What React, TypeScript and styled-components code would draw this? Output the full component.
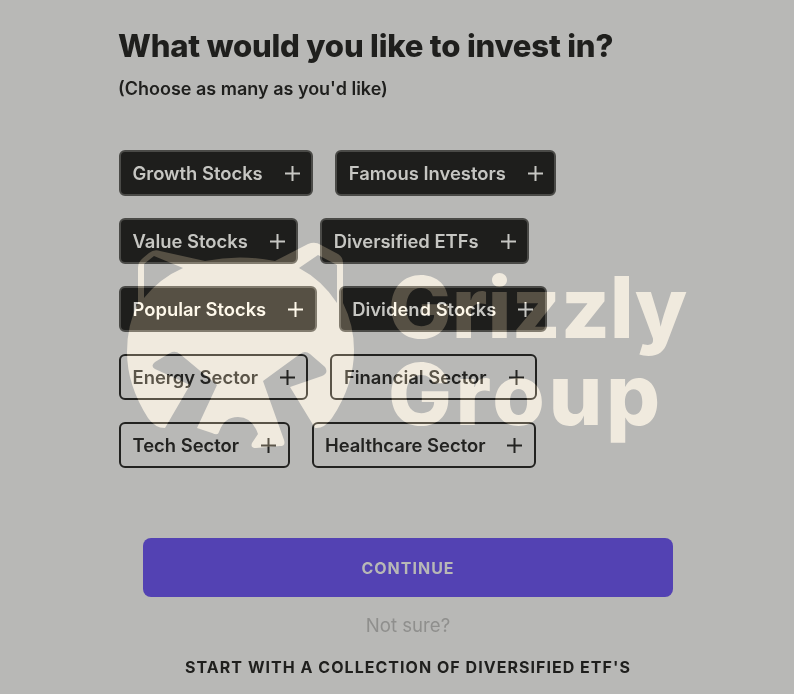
import React from "react";
import styled, { createGlobalStyle } from "styled-components";

const GlobalStyle = createGlobalStyle`
  html, body {
    margin: 0;
    padding: 0;
    background: #b8b8b6;
  }
`;

const Page = styled.main`
  position: relative;
  isolation: isolate;
  width: 794px;
  height: 694px;
  overflow: hidden;
  box-sizing: border-box;
  padding: 27px 0 0 119px;
  background: #b8b8b6;
  font-family: Inter, "Liberation Sans", sans-serif;
  color: #1f1f1d;
`;

const Title = styled.h1`
  margin: 0 0 0 -1px;
  font-size: 31.1px;
  line-height: 38px;
  font-weight: 800;
  letter-spacing: -0.2px;
`;

const Subtitle = styled.p`
  margin: 11px 0 0 -1px;
  font-size: 18px;
  line-height: 26px;
  font-weight: 600;
`;

const Options = styled.div`
  display: flex;
  flex-direction: column;
  align-items: flex-start;
  gap: 22px;
  margin-top: 48px;
`;

const Row = styled.div`
  display: flex;
  gap: 22px;
`;

const Chip = styled.button<{ $filled: boolean }>`
  display: flex;
  align-items: center;
  justify-content: space-between;
  gap: 22px;
  height: 46px;
  box-sizing: border-box;
  padding: 0 11.5px;
  border-radius: 6px;
  border: 2.5px solid ${({ $filled }) => ($filled ? "#4a4a47" : "#222220")};
  background: ${({ $filled }) => ($filled ? "#1e1e1c" : "transparent")};
  color: ${({ $filled }) => ($filled ? "#c6c6c2" : "#232321")};
  font-family: inherit;
  font-size: 18.4px;
  font-weight: 600;
  white-space: nowrap;
`;

const PlusIcon = styled.svg`
  width: 15px;
  height: 15px;
  flex: none;
`;

const Footer = styled.div`
  display: flex;
  flex-direction: column;
  align-items: center;
  width: 530px;
  margin: 70px 0 0 24px;
`;

const ContinueButton = styled.button`
  width: 100%;
  height: 59px;
  border: 0;
  border-radius: 8px;
  background: #5342b3;
  color: #b8b8b6;
  font-family: inherit;
  font-size: 16px;
  font-weight: 700;
  letter-spacing: 1px;
`;

const NotSure = styled.p`
  margin: 16px 0 0;
  font-size: 18.6px;
  line-height: 24px;
  color: #8f8f8d;
`;

const CollectionLink = styled.a`
  margin-top: 19px;
  font-size: 16px;
  line-height: 22px;
  font-weight: 700;
  letter-spacing: 1.03px;
  color: #1f1f1d;
  white-space: nowrap;
`;

// watermark sits over the whole page and adds light to whatever is under it
const Watermark = styled.div`
  position: absolute;
  inset: 0;
  mix-blend-mode: plus-lighter;
  pointer-events: none;
`;

const BearMark = styled.svg`
  position: absolute;
  left: 0;
  top: 0;
  width: 794px;
  height: 694px;
`;

const Brand = styled.div`
  position: absolute;
  left: 388px;
  top: 264px;
  font-size: 85px;
  line-height: 87px;
  font-weight: 800;
  color: rgb(56, 50, 40);
`;

const BrandLine = styled.div<{ $spacing: number }>`
  letter-spacing: ${({ $spacing }) => $spacing}px;
`;

const options = [
  [
    { label: "Growth Stocks", filled: true },
    { label: "Famous Investors", filled: true },
  ],
  [
    { label: "Value Stocks", filled: true },
    { label: "Diversified ETFs", filled: true },
  ],
  [
    { label: "Popular Stocks", filled: true },
    { label: "Dividend Stocks", filled: true },
  ],
  [
    { label: "Energy Sector", filled: false },
    { label: "Financial Sector", filled: false },
  ],
  [
    { label: "Tech Sector", filled: false },
    { label: "Healthcare Sector", filled: false },
  ],
];

const bearPath = `
  M138 303 L138 268 Q138 262 143 258 L149 253 Q154 249 160 251 L205 261
  Q240 254 275 261 L308 244 Q315 241 321 245 L338 254 Q343 257 343 263 L343 303
  Q354 325 354 350 Q354 385 332 418 Q324 429 315 428 L290 387
  L322 376 Q329 373 325 367 L310 354 Q305 350 300 354 L263 381
  L284 440 Q286 446 280 446 L256 448 Q250 448 252 443 L258 434
  Q252 417 238 417 Q224 417 219 432 Q218 436 212 433 L197 428
  L217 385 L180 354 Q175 350 170 353 L155 362 Q150 366 155 369 L190 385
  L165 428 Q155 428 148 418 Q127 385 127 352 Q127 325 138 303 Z
  M144 264 L154 256 L183 268 Q160 278 144 298 Z
  M299 268 L318 255 L337 265 L337 303 Q322 280 299 268 Z
`;

export default function App() {
  return (
    <Page>
      <GlobalStyle />
      <Title>What would you like to invest in?</Title>
      <Subtitle>(Choose as many as you'd like)</Subtitle>
      <Options>
        {options.map((row) => (
          <Row key={row[0].label}>
            {row.map((option) => (
              <Chip key={option.label} $filled={option.filled}>
                {option.label}
                <PlusIcon viewBox="0 0 15 15" fill="none" stroke="currentColor" strokeWidth="2">
                  <path d="M7.5 0v15M0 7.5h15" />
                </PlusIcon>
              </Chip>
            ))}
          </Row>
        ))}
      </Options>
      <Footer>
        <ContinueButton>CONTINUE</ContinueButton>
        <NotSure>Not sure?</NotSure>
        <CollectionLink>START WITH A COLLECTION OF DIVERSIFIED ETF'S</CollectionLink>
      </Footer>
      <Watermark>
        <BearMark viewBox="0 0 794 694">
          <path d={bearPath} fill="rgb(56, 50, 40)" fillRule="evenodd" />
        </BearMark>
        <Brand>
          <BrandLine $spacing={-0.2}>Grizzly</BrandLine>
          <BrandLine $spacing={3.5}>Group</BrandLine>
        </Brand>
      </Watermark>
    </Page>
  );
}
